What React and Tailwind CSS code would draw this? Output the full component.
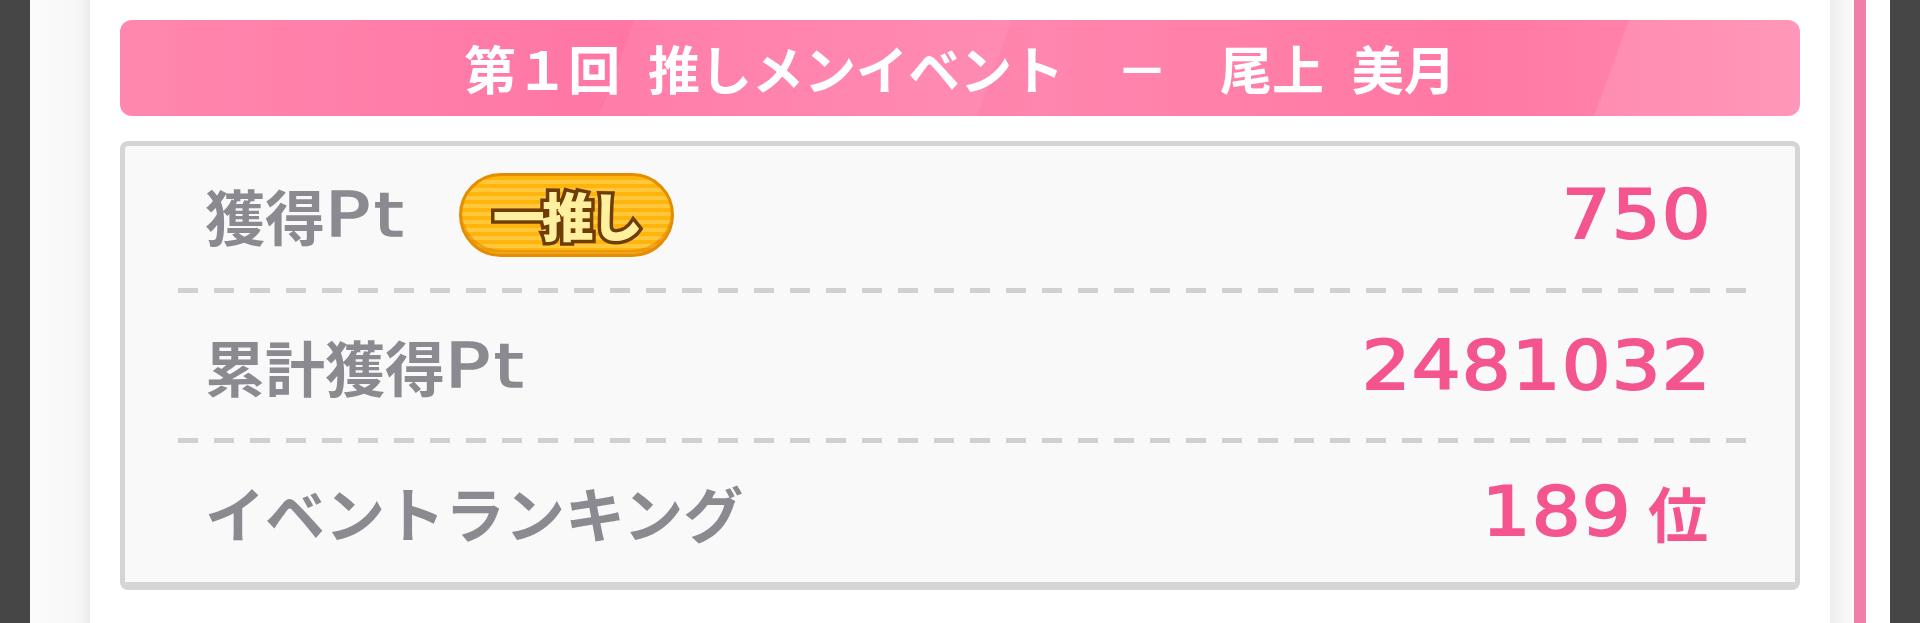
import React from "react";

const rows = [
  { label: "獲得", latin: "Pt", value: "750", badge: true },
  { label: "累計獲得", latin: "Pt", value: "2481032" },
  { label: "イベントランキング", value: "189", unit: "位" },
];

const Badge = () => (
  <div className="ml-[52px] flex h-[84px] w-[215px] items-center justify-center rounded-full border-[3px] border-[#e58c00] bg-[repeating-linear-gradient(180deg,#ffb30d_0px,#ffb30d_4px,#ffc83a_4px,#ffc83a_8px)] shadow-[inset_0_-4px_0_rgba(214,120,0,0.45)]">
    <span className="font-['Noto_Sans_CJK_JP',sans-serif] text-[52px] font-black leading-none tracking-[-3px] text-[#fff0a0] [-webkit-text-stroke:7px_#6e3c06] [paint-order:stroke_fill]">
      一推し
    </span>
  </div>
);

const Row = ({ row, height }) => (
  <div className={`flex items-center pl-[80px] pr-[83px] ${height}`}>
    <span className="flex items-center font-['Noto_Sans_CJK_JP',sans-serif] text-[60px] font-bold leading-none text-[#8a8a90]">
      {row.label}
      {row.latin && (
        <span className="mr-[16px] inline-block origin-left scale-x-[1.25] font-['DejaVu_Sans',sans-serif] font-normal tracking-[3px] [-webkit-text-stroke:1.5px_#8a8a90]">
          {row.latin}
        </span>
      )}
    </span>
    {row.badge && <Badge />}
    <span className="ml-auto flex items-center leading-none text-[#f4558e]">
      <span className="inline-block origin-right scale-x-[1.13] font-['DejaVu_Sans',sans-serif] text-[68px] font-normal tracking-[1px] [-webkit-text-stroke:2px_#f4558e]">
        {row.value}
      </span>
      {row.unit && (
        <span className="ml-[16px] mr-[4px] font-['Noto_Sans_CJK_JP',sans-serif] text-[60px] font-bold">
          {row.unit}
        </span>
      )}
    </span>
  </div>
);

const Dashes = () => (
  <div className="ml-[53px] mr-[48px] flex h-[6px] items-center">
    <div className="h-[5px] w-full bg-[repeating-linear-gradient(90deg,#c6c6c9_0px,#c6c6c9_20px,transparent_20px,transparent_36px)] opacity-80 blur-[0.6px]" />
  </div>
);

export default function App() {
  return (
    <div className="flex h-[623px] w-[1920px] overflow-hidden bg-[#464646]">
      {/* dark frame left */}
      <div className="w-[30px] shrink-0" />

      {/* left gutter */}
      <div className="w-[60px] shrink-0 bg-[linear-gradient(90deg,#fbfbfb_0%,#f7f7f7_80%,#ececec_100%)]" />

      {/* card */}
      <div className="w-[1740px] shrink-0 bg-white px-[30px] pt-[20px]">
        <div className="flex h-[96px] items-center justify-center rounded-[12px] bg-[linear-gradient(110deg,rgba(255,255,255,0)_0%,rgba(255,255,255,0)_30%,rgba(255,255,255,0.06)_30%,rgba(255,255,255,0.06)_52%,rgba(255,255,255,0)_52%,rgba(255,255,255,0)_88%,rgba(255,255,255,0.1)_88%),linear-gradient(90deg,#ff87ae_0%,#ff76a4_30%,#ff86ae_55%,#ff78a3_80%,#ff8bb0_100%)]">
          <span className="font-['Noto_Sans_CJK_JP',sans-serif] text-[52px] font-bold leading-none text-white [word-spacing:16px]">
            第１回 推しメンイベント　－　尾上 美月
          </span>
        </div>

        <div className="mt-[25px] h-[449px] rounded-[8px] border-x-[5px] border-t-[5px] border-b-[8px] border-[#d5d5d5] bg-[#f9f9fa]">
          <Row row={rows[0]} height="h-[141px] pb-[4px]" />
          <Dashes />
          <Row row={rows[1]} height="h-[144px] pt-[2px]" />
          <Dashes />
          <Row row={rows[2]} height="h-[137px]" />
        </div>
      </div>

      {/* right gutter + scroll line */}
      <div className="w-[24px] shrink-0 bg-[linear-gradient(90deg,#eeeeee_0%,#f6f6f6_60%,#fbfbfb_100%)]" />
      <div className="w-[12px] shrink-0 bg-[#f07ea8]" />
      <div className="w-[24px] shrink-0 bg-white" />

      {/* dark frame right */}
      <div className="flex-1" />
    </div>
  );
}
